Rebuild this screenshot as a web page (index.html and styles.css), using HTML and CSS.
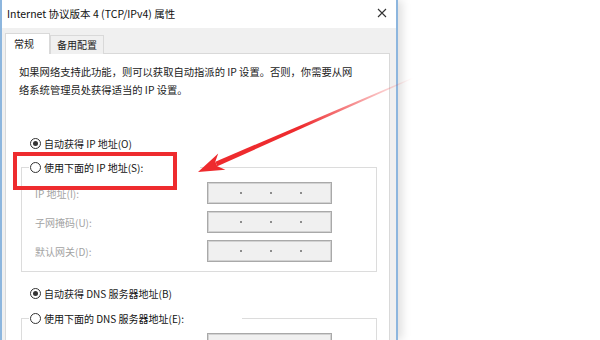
FILE: index.html
```html
<!DOCTYPE html>
<html lang="zh-CN">
<head>
    <meta charset="UTF-8">
    <title>Internet 协议版本 4 (TCP/IPv4) 属性</title>
    <link rel="stylesheet" href="styles.css">
</head>
<body>
    <div class="dialog">
        <div class="titlebar">
            <span class="title">Internet 协议版本 4 (TCP/IPv4) 属性</span>
            <svg class="close" width="10" height="10" viewBox="0 0 10 10">
                <path d="M1 1 L9 9 M9 1 L1 9" stroke="#333" stroke-width="1.1" fill="none"/>
            </svg>
        </div>

        <div class="body">
            <div class="tabs">
                <div class="tab active">常规</div>
                <div class="tab">备用配置</div>
            </div>

            <div class="panel">
                <p class="intro">如果网络支持此功能，则可以获取自动指派的 IP 设置。否则，你需要从网<br>络系统管理员处获得适当的 IP 设置。</p>

                <label class="radio-row first">
                    <span class="radio checked"></span>自动获得 IP 地址(O)
                </label>

                <fieldset class="group">
                    <legend class="legend-ip">
                        <span class="radio"></span>使用下面的 IP 地址(S):
                    </legend>
                    <div class="field-row">
                        <span class="field-label">IP 地址(I):</span>
                        <div class="ip-box"><i></i><i></i><i></i></div>
                    </div>
                    <div class="field-row">
                        <span class="field-label">子网掩码(U):</span>
                        <div class="ip-box"><i></i><i></i><i></i></div>
                    </div>
                    <div class="field-row">
                        <span class="field-label">默认网关(D):</span>
                        <div class="ip-box"><i></i><i></i><i></i></div>
                    </div>
                </fieldset>

                <label class="radio-row dns">
                    <span class="radio checked"></span>自动获得 DNS 服务器地址(B)
                </label>

                <fieldset class="group group-dns">
                    <legend class="legend-dns">
                        <span class="radio"></span>使用下面的 DNS 服务器地址(E):
                    </legend>
                    <div class="field-row">
                        <span class="field-label">首选 DNS 服务器(P):</span>
                        <div class="ip-box"><i></i><i></i><i></i></div>
                    </div>
                </fieldset>
            </div>
        </div>
    </div>

    <!-- red annotation drawn over the screenshot -->
    <div class="mark-box"></div>
    <svg class="arrow" width="600" height="340" viewBox="0 0 600 340">
        <defs>
            <linearGradient id="fade" gradientUnits="userSpaceOnUse" x1="413" y1="78" x2="300" y2="127">
                <stop offset="0" stop-color="#ee2b2e" stop-opacity="0"/>
                <stop offset="1" stop-color="#ee2b2e" stop-opacity="1"/>
            </linearGradient>
        </defs>
        <polygon fill="url(#fade)" points="217.3,166.3 413.2,78.5 412.8,77.5 215.3,161.7"/>
        <polygon fill="#ee2b2e" points="198,172 225.4,169.8 217.3,166.3 215.3,161.7 218.2,153.4"/>
    </svg>
</body>
</html>
```

FILE: styles.css
```css
* {
    margin: 0;
    padding: 0;
    box-sizing: border-box;
}

body {
    font-family: "Noto Sans CJK SC", "Noto Sans", sans-serif;
    font-size: 10px;
    color: #1a1a1a;
    background: #fff;
    width: 600px;
    height: 340px;
    overflow: hidden;
    position: relative;
}

.dialog {
    width: 398px;
    height: 340px;
    overflow: hidden;
    border-left: 2px solid #8db6de;
    border-right: 2px solid #8db6de;
    box-shadow: 4px 0 9px rgba(0, 0, 0, 0.13);
    display: flex;
    flex-direction: column;
    background: #f0f0f0;
}

.titlebar {
    height: 28px;
    flex-shrink: 0;
    background: #fff;
    display: flex;
    align-items: center;
    justify-content: space-between;
    padding: 0 9px 2px 5px;
}

.title {
    font-size: 10.5px;
    color: #111;
}

.body {
    flex-shrink: 0;
    padding: 5px 6px 0 3px;
}

.tabs {
    display: flex;
    align-items: flex-end;
    height: 21px;
    position: relative;
    z-index: 1;
}

.tab {
    height: 19px;
    padding: 0 6px;
    border: 1px solid #d9d9d9;
    border-bottom: none;
    background: #f0f0f0;
    line-height: 18px;
    color: #222;
}

.tab.active {
    height: 21px;
    width: 45px;
    background: #fff;
    padding-left: 8px;
    line-height: 20px;
}

.panel {
    background: #fff;
    border: 1px solid #d9d9d9;
    margin-top: -1px;
    height: 300px;
    padding: 9px 0 0 0;
}

.intro {
    line-height: 18px;
    padding-left: 13px;
    font-size: 10.3px;
    color: #222;
}

.radio-row {
    display: flex;
    align-items: center;
    height: 14px;
    padding-left: 24px;
}

.radio-row.first {
    margin-top: 37px;
}

.radio-row.dns {
    margin-top: 14px;
}

.radio {
    width: 11px;
    height: 11px;
    border: 1px solid #333;
    border-radius: 50%;
    background: #fff;
    margin-right: 3px;
    display: inline-flex;
    align-items: center;
    justify-content: center;
    flex-shrink: 0;
}

.radio.checked::after {
    content: "";
    width: 5px;
    height: 5px;
    border-radius: 50%;
    background: #333;
}

.group {
    border: 1px solid #dcdcdc;
    width: 356px;
    margin: 10px 0 0 15px;
    padding: 8px 0 9px 13px;
    display: flex;
    flex-direction: column;
    gap: 7px;
}

.group-dns {
    margin-top: 11px;
}

.group legend {
    display: flex;
    align-items: center;
    height: 14px;
    margin-left: -6px;
    padding-left: 1px;
    color: #111;
}

.legend-ip {
    width: 171px;
}

.legend-dns {
    width: 213px;
}

.field-row {
    display: flex;
    align-items: center;
    height: 22px;
}

.field-label {
    width: 172px;
    color: #a3a3a3;
}

.ip-box {
    width: 125px;
    height: 22px;
    background: #f0f0f0;
    border: 1px solid #a9a9a9;
    box-shadow: inset 0 0 0 1px #d2d2d2;
    display: flex;
    align-items: center;
    gap: 28px;
    padding-left: 32px;
}

.ip-box i {
    width: 2px;
    height: 2px;
    background: #8c8c8c;
}

.mark-box {
    position: absolute;
    left: 13px;
    top: 152px;
    width: 164px;
    height: 38px;
    border: 4px solid #ee2b2e;
}

.arrow {
    position: absolute;
    left: 0;
    top: 0;
    pointer-events: none;
}
```
